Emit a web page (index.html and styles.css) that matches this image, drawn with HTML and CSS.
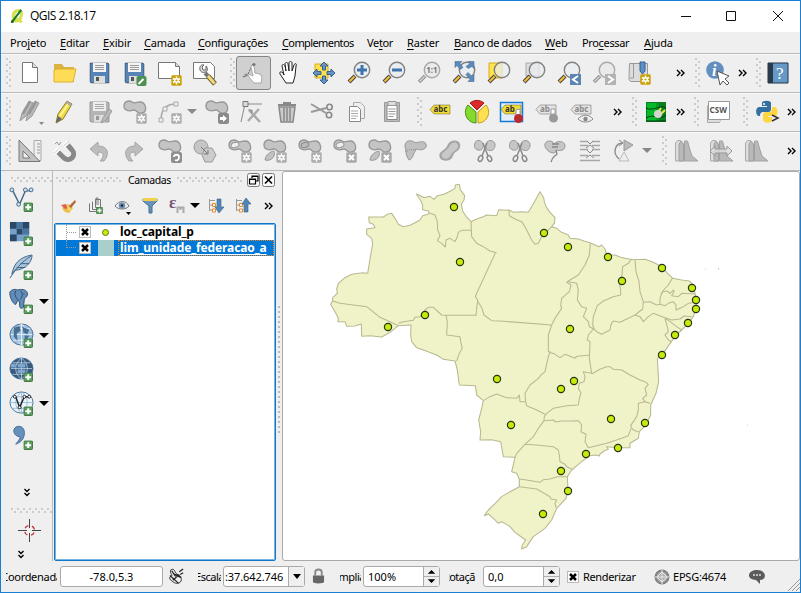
FILE: index.html
```html
<!DOCTYPE html>
<html lang="pt-BR">
<head>
<meta charset="utf-8">
<title>QGIS 2.18.17</title>
<link rel="stylesheet" href="styles.css">
</head>
<body>
<svg class="defs" aria-hidden="true">
<defs>
<symbol id="gear" viewBox="0 0 11 11"><rect x=".3" y=".3" width="10.4" height="10.4" rx="1.4" fill="currentColor"/><path d="M5.5 1.5v8M2 3.5l7 4M2 7.500l7-4" stroke="#fff" stroke-width="1.5"/><circle cx="5.500" cy="5.500" r="2.400" fill="#fff"/><circle cx="5.500" cy="5.500" r="1.100" fill="currentColor"/></symbol>
<symbol id="cross" viewBox="0 0 11 11"><rect x=".3" y=".3" width="10.4" height="10.4" rx="1.4" fill="#a8a8a8"/><path d="M3 3l5 5M8 3l-5 5" stroke="#fff" stroke-width="2.200"/></symbol>
<symbol id="plus" viewBox="0 0 10 10"><rect x=".5" y=".5" width="9" height="9" rx="1" fill="#5d9e60" stroke="#3d7541"/><path d="M5 2v6M2 5h6" stroke="#fff" stroke-width="2"/></symbol>
<symbol id="blob" viewBox="0 0 24 24"><path d="M1 6C1 1 6 0 9 2s5 0 8 0c6 0 8 10 2 11-5 1-5-3-8-3s-4 1.500-6 .5C2 10 1 9 1 6z" fill="#c4c4c4" stroke="#969696" stroke-width="1.300"/></symbol>
<symbol id="lens" viewBox="0 0 24 24"><path d="M8 15l-6 6" stroke="#444" stroke-width="4"/><path d="M7.500 15.500l-5 5" stroke="#f3bd36" stroke-width="2.200"/><circle cx="15" cy="9" r="7.700" fill="#e9edf0" fill-opacity=".75" stroke="#828282" stroke-width="1.400"/></symbol>
<symbol id="lensg" viewBox="0 0 24 24"><path d="M8 15l-6 6" stroke="#909090" stroke-width="3.500"/><path d="M7.500 15.500l-5 5" stroke="#d5d5d5" stroke-width="1.500"/><circle cx="15" cy="9" r="7.700" fill="#eaeaea" stroke="#a8a8a8" stroke-width="1.400"/></symbol>
<symbol id="chev" viewBox="0 0 10 8"><path d="M1 1l3 3-3 3M5 1l3 3-3 3" fill="none" stroke="#000" stroke-width="1.400"/></symbol>
<symbol id="chevd" viewBox="0 0 8 10"><path d="M1.500 1l2.500 2.500L6.500 1M1.500 5l2.500 2.500L6.500 5" fill="none" stroke="#000" stroke-width="1.400"/></symbol>
<symbol id="disk" viewBox="0 0 24 24"><path d="M2 2h18l1 1v19H3l-1-1z" fill="currentColor" stroke="#000" stroke-opacity=".35"/><path d="M5 2h13v9H5z" fill="#f4f4f4"/><path d="M7 4.500h9M7 6.500h9M7 8.500h9" stroke="#999"/><path d="M6 15h11v7H6z" fill="#ddd"/><path d="M8 16h3v4H8z" fill="#555"/></symbol>
<symbol id="graydisk" viewBox="0 0 24 24"><path d="M2 2h18l1 1v19H3l-1-1z" fill="#b4b4b4" stroke="#999"/><path d="M5 2h13v9H5z" fill="#eee"/><path d="M7 4.500h9M7 6.500h9M7 8.500h9" stroke="#aaa"/><path d="M6 15h11v7H6z" fill="#ddd"/><path d="M8 16h3v4H8z" fill="#999"/></symbol>
<symbol id="hist" viewBox="0 0 24 24"><path d="M1.500 22V4l2-2.500h3L9 5l1 17z" fill="#ddd" stroke="#aaa"/><path d="M5 22V5l2-3 2.500 3v17zM10.500 22V2h3l2.500 9 2 6 6 5z" fill="#b9b9b9" stroke="#a2a2a2"/></symbol>
<symbol id="tag" viewBox="0 0 24 24"><path d="M1 9.500L5 5h16v9H5z" fill="currentColor" stroke="#000" stroke-opacity=".3"/></symbol>
<symbol id="scis" viewBox="0 0 24 24"><path d="M2 4c1-4 7-3 8 1s-1 7-5 6-4-4-3-7zM14 3c3-3 9-1 8 4s-4 5-7 4-3-5-1-8z" fill="#c6c6c6" stroke="#999"/><path d="M10 4l5 13M14 4l-5 13" stroke="#8a8a8a" stroke-width="1.500"/><ellipse cx="7.500" cy="19.500" rx="2" ry="3" transform="rotate(25 7.500 19.500)" fill="#eee" stroke="#8a8a8a" stroke-width="1.500"/><ellipse cx="16.500" cy="19.500" rx="2" ry="3" transform="rotate(-25 16.500 19.500)" fill="#eee" stroke="#8a8a8a" stroke-width="1.500"/></symbol>
<symbol id="globe" viewBox="0 0 26 26"><ellipse cx="13" cy="12" rx="12" ry="11" fill="currentColor" stroke="#4a7199"/><path d="M13 1v22M2 12h22M4 6h18M4 18h18M13 1c-8 6-8 16 0 22M13 1c8 6 8 16 0 22" fill="none" stroke="var(--grid, #fff)" stroke-opacity=".75"/></symbol>
</defs>
</svg>
<div class="window">
<header class="titlebar">
<svg class="logo" viewBox="0 0 16 17"><path d="M2 10C1 4 5 1 9 1c5 0 6 5 4 9l-1 3 2 2-3 1-2-1c-4 1-6 0-7-5z" fill="#d8e04e"/><path d="M5 10c0-4 2-6 5-6 2 2 0 6-2 7z" fill="#fff"/><path d="M2 15L12 2" stroke="#1c7b2c" stroke-width="2.400"/><path d="M2 13v3M1 15h3" stroke="#174b22"/></svg>
<h1>QGIS 2.18.17</h1>
<svg class="winbtns" viewBox="0 0 110 12"><path d="M1 6.500h10M46.500 1.500h9v9h-9zM93 1l10 10M103 1L93 11" fill="none" stroke="#111"/></svg>
</header>
<nav class="menu"><span>Pro<u>j</u>eto</span><span><u>E</u>ditar</span><span><u>E</u>xibir</span><span><u>C</u>amada</span><span class="tight"><u>C</u>onfigurações</span><span class="tighter"><u>C</u>omplementos</span><span class="tight">Ve<u>t</u>or</span><span><u>R</u>aster</span><span class="tight"><u>B</u>anco de dados</span><span><u>W</u>eb</span><span class="tight">Pro<u>c</u>essar</span><span><u>A</u>juda</span></nav>

<div class="bar bar1">
<i class="grip"></i>
<svg viewBox="0 0 24 24"><path d="M4.500 1.500h10l5 5v15h-15z" fill="#fff" stroke="#777"/><path d="M14.500 1.500v5h5" fill="#ddd" stroke="#777"/></svg>
<svg viewBox="0 0 24 24"><path d="M1 3h8l2 3h10v15H1z" fill="#d9b343"/><path d="M1 21V9l3-1h19l-3 13z" fill="#ffdc55" stroke="#dfaf33"/></svg>
<svg class="blue"><use href="#disk"/></svg>
<svg class="blue" viewBox="0 0 24 24"><use href="#disk" width="24" height="24"/><rect x="13.500" y="15" width="10" height="10" rx="2" fill="#4b8f52"/><path d="M15.500 23l5-5" stroke="#fff" stroke-width="2"/></svg>
<svg class="gold" viewBox="0 0 24 24"><path d="M.5 1.500h17l4 4v12H.5z" fill="#fff" stroke="#777"/><path d="M17.500 1.500v4h4" fill="#ddd" stroke="#777"/><use href="#gear" x="13" y="14" width="11" height="11"/></svg>
<svg viewBox="0 0 24 24"><path d="M.5 1.500h17l4 4v12H.5z" fill="#fff" stroke="#777"/><path d="M12 12l3 3" stroke="#777" stroke-width="4"/><path d="M15 15l7 8" stroke="#6d6544" stroke-width="5"/><path d="M15 15l6.500 7.500" stroke="#f3d873" stroke-width="3"/><path d="M11 4c-2-1-5 1-4 5 1 3 5 3 7 1 1-2 0-4-1-5v4h-3L9 6z" fill="#ddd" stroke="#666"/></svg>
<i class="grip"></i>
<span class="pressed"><svg viewBox="0 0 24 24"><path d="M1 16l5-2M6 13L11 3" stroke="#555" stroke-dasharray="2 1"/><circle cx="12" cy="3.500" r="1.500" fill="#777"/><circle cx="4" cy="14" r="1.500" fill="#888"/><path d="M9 6c0-2 2.500-2 3 0l1 6 5 1 2 3-1 6h-7l-5-6c-1-2 0-3 2-2l2 1z" fill="#fff" stroke="#999" stroke-width=".8"/></svg></span>
<svg viewBox="-1 0 24 24"><path d="M8 22l-6-9c-1-2 1-3 3-1l1 2-2-9c0-2 2-2 3 0l1 5-1-7c0-2 3-2 3 0l1 7V2c0-2 3-2 3 0v8l2-6c1-2 3-2 2 1l-1 10-2 7z" fill="#fff" stroke="#222"/></svg>
<svg viewBox="0 0 24 24"><path d="M3 3h13v14H3z" fill="#ffe14a" stroke="#d7ac1c"/><path d="M12 1l4 4h-2.500v4h-3V5H8zM12 23l-4-4h2.500v-4h3v4H16zM1 12l4-4v2.500h4v3H5V16zM23 12l-4 4v-2.500h-4v-3h4V8z" fill="#6794c5" stroke="#36618f"/></svg>
<svg viewBox="0 0 24 24"><use href="#lens" width="24" height="24"/><path d="M15 4v10M10 9h10" stroke="#3e73ad" stroke-width="3"/></svg>
<svg viewBox="0 0 24 24"><use href="#lens" width="24" height="24"/><path d="M10 9h10" stroke="#3e73ad" stroke-width="3"/></svg>
<svg viewBox="0 0 24 24"><use href="#lensg" width="24" height="24"/><text x="9.200" y="12" class="tiny">1:1</text></svg>
<svg viewBox="0 0 24 24"><use href="#lens" width="24" height="24"/><path d="M3 1h7L8 3l3 4-3 2-3-4-2 2zM22 1v7l-2-2-4 2-2-2 4-3-2-2zM22 21v-7l-2 2-4-4-2 2 4 5-2 2z" transform="translate(0 -.5)" fill="#5c8bbb" stroke="#466d95" stroke-width=".6"/></svg>
<svg viewBox="0 0 24 24"><path d="M2 2h13v15H2z" fill="#ffe34c" stroke="#d5aa20"/><use href="#lens" width="24" height="24"/></svg>
<svg viewBox="0 0 24 24"><path d="M4 2h13v13H4z" fill="#ddd" stroke="#aaa"/><use href="#lens" width="24" height="24"/></svg>
<svg viewBox="0 0 24 24"><use href="#lens" width="24" height="24"/><path d="M13 13h11v11H13z" fill="#5c86b2"/><path d="M21 15l-5 3.500 5 3.500" fill="none" stroke="#fff" stroke-width="2"/></svg>
<svg viewBox="0 0 24 24"><use href="#lensg" width="24" height="24"/><path d="M13 13h11v11H13z" fill="#b3b3b3"/><path d="M16 15l5 3.500-5 3.500" fill="none" stroke="#fff" stroke-width="2"/></svg>
<svg class="gold" viewBox="0 0 24 24"><path d="M2.500 2.500h18v18H5c-2 0-3-1-3-3z" fill="#ddd" stroke="#999"/><path d="M6.500 3v14H3" fill="none" stroke="#999"/><path d="M13 1h5v9l-2.500 3L13 10z" fill="#5b91c7" stroke="#315f91"/><use href="#gear" x="13" y="13" width="11" height="11"/></svg>
<svg class="chev"><use href="#chev"/></svg><i class="grip"></i>
<svg viewBox="0 0 24 24"><circle cx="10" cy="9" r="8.800" fill="#628fc0"/><text x="7" y="15" class="info">i</text><path d="M12 10l3 14 3-4 4 4 2-2-4-4 4-3z" fill="#fff" stroke="#555"/></svg>
<svg class="chev"><use href="#chev"/></svg><i class="grip"></i>
<svg viewBox="0 0 24 24"><path d="M2 2h20v20H2z" fill="#6799c6" stroke="#213546"/><path d="M2 2h5v20H2z" fill="#293b4b"/><text x="10" y="18" class="help">?</text></svg>
</div>

<div class="bar bar2">
<i class="grip"></i>
<svg viewBox="0 0 24 24"><path d="M2 21l2-8L11 1l4 2-7 13zM8 21l2-8 7-12 4 2-7 13z" fill="#b9b9b9" stroke="#999"/><path d="M5 14L12 2M11 14l7-12" stroke="#959595" stroke-width="2"/><path d="M21 22h5l-2.500 3z" fill="#888"/></svg>
<svg viewBox="0 0 24 24"><path d="M3 23l2-9L14 1l5 3-9 15z" fill="#eed944" stroke="#8b7931"/><path d="M7 16L16 3" stroke="#fff59d" stroke-width="2"/><path d="M3 23l2-7 4 3z" fill="#696969"/><path d="M14 1l5 3-1.500 2-5-3z" fill="#aaa"/></svg>
<svg viewBox="0 0 24 24"><use href="#graydisk" width="24" height="24"/><path d="M13 23l2-5 6-9 3 2-6 9z" fill="#bbb" stroke="#999"/></svg>
<svg class="grey" viewBox="0 0 24 24"><use href="#blob" width="24" height="24"/><use href="#gear" x="13" y="13" width="11" height="11"/></svg>
<svg class="grey" viewBox="0 0 24 24"><path d="M3 20C3 10 8 4 18 4" fill="none" stroke="#aaa" stroke-width="1.500"/><path d="M1 18h4v4H1zM5 7h4v4H5zM16 2h4v4h-4z" fill="#eee" stroke="#aaa"/><use href="#gear" x="13" y="13" width="11" height="11"/></svg>
<svg class="drop" viewBox="0 0 10 6"><path d="M0 0h10L5 5z" fill="#888"/></svg>
<svg viewBox="0 0 24 24"><use href="#blob" width="24" height="24"/><rect x="13" y="13" width="11" height="11" rx="2" fill="#8a8a8a"/><path d="M15 17h3v-2l4 3.500-4 3.500v-2h-3z" fill="#fff"/></svg>
<svg viewBox="0 0 24 24"><path d="M5 4h17M5 4L1 22" stroke="#8a8a8a"/><path d="M3 1.500h5v5H3z" fill="#ddd" stroke="#777"/><path d="M9 10l11 12M19 9L8 21" stroke="#aaa" stroke-width="2.500"/><path d="M8 9l5 1-1 4z" fill="#999"/></svg>
<svg viewBox="0 0 24 24"><path d="M4 7h16l-2 15H6z" fill="#ccc" stroke="#888" stroke-width="1.500"/><path d="M9 8v13M12 8v13M15 8v13" stroke="#888" stroke-width="1.500"/><path d="M3 5h18M8 3h8" stroke="#888" stroke-width="2"/></svg>
<svg viewBox="0 0 24 24"><path d="M1 4l15 9M1 12l15-4" stroke="#999" stroke-width="2"/><circle cx="19.500" cy="7" r="2.700" fill="none" stroke="#888" stroke-width="1.600"/><circle cx="19" cy="15" r="2.700" fill="none" stroke="#888" stroke-width="1.600"/></svg>
<svg viewBox="0 0 24 24"><path d="M8.500 2.500h7l4 4v12h-11z" fill="#eee" stroke="#aaa"/><path d="M4.500 6.500h8l3 3v12h-11z" fill="#fff" stroke="#888"/><path d="M6 11h7M6 13.500h7M6 16h7M6 18.500h5" stroke="#aaa"/></svg>
<svg viewBox="0 0 24 24"><path d="M4.500 2.500h15v19h-15z" fill="#bbb" stroke="#999"/><path d="M7 5.500h10v14H7z" fill="#fff" stroke="#888"/><path d="M8 1.500h8v4H8z" fill="#ddd" stroke="#999"/><path d="M8.500 9h7M8.500 11.500h7M8.500 14h7M8.500 16.500h5" stroke="#999"/></svg>
<i class="grip"></i>
<svg class="yellow" viewBox="0 0 24 24"><use href="#tag" width="24" height="24"/><text x="4.500" y="12.300" class="lab">abc</text></svg>
<svg viewBox="0 0 24 24"><path d="M12 10L5 3c4-3.500 10-3.500 14 0z" fill="#df2929" stroke="#a41818"/><path d="M11 12v11C2 23-3 12 3 5z" fill="#84da2d" stroke="#488d1b"/><path d="M13 12v11c9 0 14-11 8-18z" fill="#ffe14f" stroke="#c29b1c"/></svg>
<svg class="yellow" viewBox="0 0 24 24"><path d="M.5 2.500h22v19H.5z" fill="#e5eef7" stroke="#1579d8" stroke-width="1.500"/><use href="#tag" width="24" height="24"/><text x="5" y="12.300" class="lab">ab</text><path d="M16 10v6h4V9z" fill="#fff" stroke="#999"/><circle cx="18.500" cy="18.500" r="4.500" fill="#b92b2e"/></svg>
<svg class="pale" viewBox="0 0 24 24"><use href="#tag" width="24" height="24"/><text x="5" y="12.300" class="lab mut">ab</text><path d="M16 9v6h4V9z" fill="#fff" stroke="#999"/><circle cx="18.500" cy="18" r="4.500" fill="#999"/></svg>
<svg class="pale" viewBox="0 0 24 24"><use href="#tag" width="24" height="24"/><text x="4.500" y="12.300" class="lab mut">abc</text><path d="M8 19c4-5 11-5 15 0-4 4-11 4-15 0z" fill="#eee" stroke="#888"/><circle cx="15.500" cy="19" r="2.200" fill="#888"/></svg>
<svg class="chev"><use href="#chev"/></svg><i class="grip"></i>
<svg viewBox="0 0 24 24"><path d="M2 2h20v20H2z" fill="#087d22"/><path d="M3 3h9v18H3z" fill="#05b929"/><path d="M12 3h3v18h-3z" fill="#069b25"/><path d="M2 8c7 4 14-4 20 0M2 18c8-5 13 3 20-3M2 21h20" stroke="#043c11" fill="none"/><path d="M13 14l4-6M16 15l5-5" stroke="#eee53e" stroke-width="2"/><circle cx="14" cy="14" r="4" fill="#d5d5ce"/></svg>
<svg class="chev"><use href="#chev"/></svg><i class="grip"></i>
<svg viewBox="0 0 24 24"><path d="M1.500 5.500v17h12l1-2" fill="#ddd" stroke="#aaa"/><path d="M2.500 1.500h21v18h-21z" fill="#fff" stroke="#999"/><text x="3.500" y="13" class="lab csw">CSW</text></svg>
<i class="grip"></i>
<svg viewBox="0 0 24 24"><path d="M7 6V3c0-3 9-3 9 0v6c0 3-2 3-4 3H8c-2 0-3 1-3 4-5 1-5-9-1-9h8V6z" fill="#356f9f"/><path d="M17 7h2c5 0 4 8 2 9h-8v1h4v3c0 4-9 3-9 0v-5c0-2 1-3 3-3h3c3 0 3-2 3-5z" fill="#ffd642"/><circle cx="9" cy="4" r="1" fill="#fff"/><path d="M17 15l6 3-6 3" fill="none" stroke="#333" stroke-width="1.500"/></svg>
<svg class="chev"><use href="#chev"/></svg>
</div>

<div class="bar bar3">
<i class="grip"></i>
<svg viewBox="0 0 24 24"><path d="M16 1.500h7v20h-7z" fill="#eee" stroke="#aaa"/><path d="M19 5h3M19 8h3M19 11h3M19 14h3" stroke="#999"/><path d="M1 1l21 21.500H1zM5 12v7h7z" fill="#c2c2c2" stroke="#777" fill-rule="evenodd"/></svg>
<svg viewBox="0 0 24 24"><path d="M4 12l7 7c6 5 13-3 8-8l-6-7" fill="none" stroke="#888" stroke-width="5"/><path d="M1.500 14l4.500-4.500M10.500 7l5-4" stroke="#fff" stroke-width="4"/><path d="M1.500 14l4.500-4.500M10.500 7l5-4" stroke="#aaa" stroke-width=".7"/><path d="M2 5l2-2 2 3 2-3" fill="none" stroke="#999"/></svg>
<svg viewBox="0 0 24 24"><path d="M2 10l8-7v4c10 0 12 8 6 15h-4c5-5 4-9-2-9v4z" fill="#bdbdbd" stroke="#a5a5a5"/></svg>
<svg viewBox="0 0 24 24"><path d="M20 10l-8-7v4C2 7 0 15 6 22h4c-5-5-4-9 2-9v4z" fill="#bdbdbd" stroke="#a5a5a5"/></svg>
<svg class="grey" viewBox="0 0 24 24"><use href="#blob" width="24" height="24"/><rect x="13" y="13" width="11" height="11" rx="2" fill="#8e8e8e"/><path d="M16 18c0-3 5-3 5 0s-2 4-4 3" fill="none" stroke="#fff" stroke-width="1.800"/></svg>
<svg viewBox="0 0 24 24"><circle cx="8" cy="8" r="7" fill="#c6c6c6" stroke="#999"/><path d="M12 9h7l4 7-4 7h-7l-3-7z" fill="#ccc" stroke="#999"/><path d="M8 8l7 7m0-4v4h-4" fill="none" stroke="#777"/></svg>
<svg class="grey" viewBox="0 0 24 24"><use href="#blob" width="24" height="24"/><ellipse cx="7" cy="6" rx="4" ry="2.500" fill="#eee" stroke="#999" transform="rotate(-15 7 6)"/><use href="#gear" x="13" y="13" width="11" height="11"/></svg>
<svg class="grey" viewBox="0 0 24 24"><use href="#blob" width="24" height="24"/><path d="M2 21c1-6 5-8 9-9 2 4-2 11-9 9z" fill="#c2c2c2" stroke="#999"/><use href="#gear" x="13" y="13" width="11" height="11"/></svg>
<svg class="grey" viewBox="0 0 24 24"><use href="#blob" width="24" height="24"/><ellipse cx="7" cy="6" rx="4" ry="2.500" fill="#bbb" stroke="#888" transform="rotate(-15 7 6)"/><use href="#gear" x="13" y="13" width="11" height="11"/></svg>
<svg viewBox="0 0 24 24"><use href="#blob" width="24" height="24"/><ellipse cx="7" cy="6" rx="4" ry="2.500" fill="#eee" stroke="#999" transform="rotate(-15 7 6)"/><use href="#cross" x="13" y="13" width="11" height="11"/></svg>
<svg viewBox="0 0 24 24"><use href="#blob" width="24" height="24"/><path d="M2 21c1-6 5-8 9-9 2 4-2 11-9 9z" fill="#c2c2c2" stroke="#999"/><use href="#cross" x="13" y="13" width="11" height="11"/></svg>
<svg viewBox="0 0 24 24"><path d="M2 7C2 1 8 1 11 3s10-3 12 2-5 7-9 5c-3 1-4 11-8 11C3 18 3 12 2 7z" fill="#c0c0c0" stroke="#999"/><path d="M3 13c1-4 8-1 10-3" stroke="#888" stroke-dasharray="1 1" fill="none"/></svg>
<svg viewBox="0 0 24 24"><path d="M10 5c4-6 14-4 12 3-1 5-6 4-7 9-2 6-11 6-13 2-3-7 6-7 8-14z" fill="#a5a5a5"/><path d="M12 6c3-4 9-3 8 2-1 4-6 4-7 8-2 4-6 5-9 2-2-5 6-6 8-12z" fill="#c8c8c8"/></svg>
<svg><use href="#scis"/></svg><svg><use href="#scis"/></svg>
<svg viewBox="0 0 24 24"><path d="M2 5c1-4 8-4 9 0 3-4 11-3 11 2s-5 5-9 4c0 2 0 2-2 3C5 14 1 8 2 5z" fill="#c6c6c6" stroke="#999"/><path d="M9 5h7M9 8h6M13 11l1 4c-3 3-5 3-6 8" fill="none" stroke="#888" stroke-width="1.300"/></svg>
<svg viewBox="0 0 24 24"><path d="M2 2.500h8M14 2.500h8M2 6.500h8M14 6.500h8M2 10.500h8M14 10.500h8M2 16.500h8M14 16.500h8M2 21.500h20" stroke="#a6a6a6" stroke-width="1.500"/><path d="M9 2l3 3 3-3M8 9l4-3 4 3M9 11l3 3 3-3M8 19l4-3 4 3" fill="none" stroke="#888"/></svg>
<svg viewBox="0 0 24 24"><path d="M6 20C-1 14 2 4 10 4" fill="none" stroke="#888" stroke-width="1.300"/><path d="M11 1l9 5-9 6z" fill="#bbb" stroke="#999"/><path d="M11 13l5 9H6z" fill="#eee" stroke="#bbb"/><path d="M6 1l4 3-4 3" fill="none" stroke="#888"/></svg>
<svg class="drop" viewBox="0 0 10 6"><path d="M0 0h10L5 5z" fill="#888"/></svg>
<i class="grip"></i>
<svg><use href="#hist"/></svg>
<svg viewBox="0 0 24 24"><use href="#hist" width="24" height="24"/><path d="M1 12l5-5v3h12V7l5 5-5 5v-3H6v3z" fill="#ddd" fill-opacity=".8" stroke="#999"/></svg>
<svg><use href="#hist"/></svg>
<svg class="chev"><use href="#chev"/></svg>
</div>

<main class="work">
<aside class="side">
<i class="grip flat"></i>
<div class="tool"><svg viewBox="0 0 26 26"><path d="M4 4l7 14 6-14h6" fill="none" stroke="#456887" stroke-width="1.500"/><g fill="#cfe1f1" stroke="#456887"><circle cx="3" cy="3" r="2"/><circle cx="10" cy="18" r="2"/><circle cx="17" cy="3" r="2"/><circle cx="23" cy="3" r="2"/></g><use href="#plus" x="15" y="16" width="10" height="10"/></svg></div>
<div class="tool"><svg viewBox="0 0 26 26"><path d="M1 1h20v20H1z" fill="#74a0ca"/><path d="M1 1h7v7H1zM14 1h7v7h-7zM8 8h6v6H8zM1 14h7v7H1z" fill="#2b4866"/><path d="M8 1h6v7H8zM14 8h7v6h-7z" fill="#4a759e"/><use href="#plus" x="15" y="16" width="10" height="10"/></svg></div>
<div class="tool"><svg viewBox="0 0 26 26"><path d="M3 20C5 9 11 2 24 0c0 7-6 15-18 16z" fill="#a9c4dd" stroke="#456887"/><path d="M1 24C7 15 12 8 23 1M8 13h9M12 9h9" fill="none" stroke="#3f607d"/><use href="#plus" x="15" y="16" width="10" height="10"/></svg></div>
<div class="tool"><svg viewBox="0 0 26 26"><path d="M1 3C3 0 7 0 9 1c3-1 9-1 10 3s-2 5-3 6l-1 9c-2 2-4 1-4-2v-4l-2-1-2 4C4 16 0 7 1 3z" fill="#628db8" stroke="#2e4f70"/><path d="M7 2c-2 3 0 7 2 9M12 2c3 3 2 7-1 9M15 5h1" fill="none" stroke="#2d4864"/><use href="#plus" x="15" y="16" width="10" height="10"/></svg><b></b></div>
<div class="tool"><svg class="lightblue" viewBox="0 0 26 26"><use href="#globe" width="26" height="26"/><path d="M5 5l6-2 1 5-4 3 1 8-4-5zM14 4l7 3-2 5-4-2zM16 13l5 0-4 7z" fill="#486f92"/><use href="#plus" x="15" y="16" width="10" height="10"/></svg><b></b></div>
<div class="tool"><svg class="deepblue" viewBox="0 0 26 26"><use href="#globe" width="26" height="26"/><path d="M9 7h8v4H9zM9 13h8v4H9zM2 7h5v4H2z" fill="#81a9cf"/><use href="#plus" x="15" y="16" width="10" height="10"/></svg></div>
<div class="tool"><svg class="paleblue" viewBox="0 0 26 26"><use href="#globe" width="26" height="26"/><path d="M7 6l4 11 5-11h5" fill="none" stroke="#222" stroke-width="1.500"/><g fill="#fff" stroke="#222"><circle cx="6" cy="6" r="1.500"/><circle cx="11" cy="17" r="1.500"/><circle cx="16" cy="6" r="1.500"/><circle cx="21" cy="6" r="1.500"/></g><use href="#plus" x="15" y="16" width="10" height="10"/></svg><b></b></div>
<div class="tool"><svg viewBox="0 0 26 26"><path d="M5 6c0-6 11-7 11 2 0 7-4 10-9 12 3-4 5-6 4-8-3 0-6-2-6-6z" fill="#6690bb" stroke="#456f99"/><use href="#plus" x="15" y="16" width="10" height="10"/></svg></div>
<svg class="chevd"><use href="#chevd"/></svg>
<i class="grip flat"></i>
<svg class="target" viewBox="0 0 24 24"><path d="M12.500 1v9M12.500 15v9M1 12.500h9M15 12.500h9" stroke="#444"/><circle cx="12.500" cy="12.500" r="5" fill="none" stroke="#c22e3a" stroke-width="1.300" stroke-dasharray="4 3.850" stroke-dashoffset="-2"/></svg>
<svg class="chevd second"><use href="#chevd"/></svg>
</aside>

<section class="layers">
<div class="dock"><i class="grip flat"></i><h2>Camadas</h2><i class="grip flat"></i><svg viewBox="0 0 28 14"><rect x=".5" y=".5" width="12" height="13" rx="2" fill="#fafafa" stroke="#777"/><rect x="15.500" y=".5" width="12" height="13" rx="2" fill="#fafafa" stroke="#777"/><path d="M5 5V3h6v5H9M2.500 6h6v5h-6zM5 3.500h6M3 6.500h5" fill="none" stroke="#000" stroke-width="1.200"/><path d="M18 3.500l7 7M25 3.500l-7 7" stroke="#000" stroke-width="1.600"/></svg></div>
<div class="ltools">
<svg viewBox="0 0 18 18"><path d="M2 11l6-4 5 4-4 5c-3 0-6-2-7-5z" fill="#edbd51"/><path d="M1 8l5-1 2 4-3 1z" fill="#dd5f4c"/><path d="M6 8l5 4-2 2z" fill="#f8df63"/><path d="M9 9l6-6 1 2-5 6z" fill="#b46a38"/></svg>
<svg viewBox="0 0 18 18"><path d="M2.500 6.500v8h7M5.500 4.500v8h7M8.500 2.500h5v8h-5z" fill="none" stroke="#777"/><path d="M9 8V1h2v7M13.500 4v10" fill="none" stroke="#777"/><use href="#plus" x="9" y="10" width="7" height="7"/></svg>
<svg viewBox="0 0 18 18"><path d="M1 9c4-6 11-6 14 0-3 4-11 4-14 0z" fill="#eee" stroke="#777"/><circle cx="8" cy="8.500" r="3.200" fill="#6992b7"/><circle cx="8" cy="8.500" r="1.200" fill="#222"/><path d="M12 15h5l-2.500 3z"/></svg>
<svg viewBox="0 0 18 18"><path d="M2 2h14v2l-5 5v7H8V9L2 4z" fill="#6a94bd" stroke="#446c91"/><path d="M2 1h14v3H2z" fill="#f4d247"/></svg>
<svg viewBox="0 0 18 18"><text x="1" y="11" class="eps">ε</text><path d="M9.500 16v-5.500h6V16M12.500 13v-2" fill="none" stroke="#aaa" stroke-width="2"/></svg>
<svg class="drop" viewBox="0 0 10 6"><path d="M0 0h10L5 5z"/></svg>
<svg viewBox="0 0 18 18"><path d="M2.500 2v12M3 3.500h5M3 8h3M3 13h3" stroke="#999"/><path d="M5.500 6.500h3v3h-3zM5.500 12h3v3h-3z" fill="#fff" stroke="#e78a26"/><path d="M10 2h4v8h3l-5 6-4-6h2z" fill="#5386b8" stroke="#355f88" stroke-width=".6"/></svg>
<svg viewBox="0 0 18 18"><path d="M2.500 2v12M3 3.500h5M3 8h3M3 13h3" stroke="#999"/><path d="M5.500 6.500h3v3h-3zM5.500 12h3v3h-3z" fill="#fff" stroke="#e78a26"/><path d="M10 15h4V7h3l-5-6-4 6h2z" fill="#5386b8" stroke="#355f88" stroke-width=".6"/></svg>
<svg class="chev"><use href="#chev"/></svg>
</div>
<ul class="tree">
<li><i class="twig"></i><i class="check"><svg viewBox="0 0 8 8"><path d="M1 1l6 6M7 1L1 7"/></svg></i><i class="point"></i><span>loc_capital_p</span></li>
<li class="selected"><i class="twig last"></i><i class="check"><svg viewBox="0 0 8 8"><path d="M1 1l6 6M7 1L1 7"/></svg></i><i class="swatch"></i><span>lim_unidade_federacao_a</span></li>
</ul>
</section>
<i class="splitter"></i>
<section class="canvas">
<svg viewBox="283 172 516 388">
<g transform="translate(320 175) scale(.33333)" stroke="#b9b891" stroke-width="3.200" stroke-linejoin="round">
<path fill="#f0f3c8" d="M289 57L303 63 312 68 330 64 342 73 352 62 372 58 392 48 405 40 406 30 418 28 421 44 434 62 432 75 424 88 428 108 438 124 453 140 465 134 478 129 490 125 500 120 530 122 536 104 560 106 567 105 580 112 605 110 625 112 638 90 648 72 660 50 671 68 673 80 678 95 690 112 705 128 703 145 695 155 710 160 725 172 745 180 750 190 775 192 792 198 810 203 830 212 838 215 845 210 855 222 860 240 885 240 900 246 915 250 940 254 975 253 1000 262 1025 275 1040 292 1058 310 1085 315 1108 318 1120 330 1125 355 1130 375 1128 400 1120 425 1105 445 1085 465 1065 485 1054 500 1040 520 1025 542 1012 550 1016 620 1008 655 992 690 992 720 978 750 958 770 955 790 930 805 930 818 895 818 860 815 865 823 852 828 840 837 838 843 828 840 810 842 785 860 755 885 742 905 744 945 738 970 710 1000 695 1035 675 1060 640 1085 620 1115 605 1122 607 1110 617 1095 600 1083 585 1072 570 1055 545 1040 535 1045 520 1030 505 1017 493 1022 505 1005 525 986 545 965 570 950 598 935 598 913 590 895 575 890 580 870 585 847 550 845 542 800 515 794 480 795 482 770 476 735 485 700 490 677 470 660 466 632 418 630 412 585 405 558 370 553 350 540 310 525 290 518 275 500 272 480 273 450 235 452 210 472 185 486 150 482 125 484 124 447 105 453 80 454 75 440 54 440 55 430 45 410 32 388 38 378 38 368 52 355 50 342 55 325 75 308 95 298 128 293 143 295 152 240 158 208 155 190 140 178 140 162 165 158 160 148 148 143 146 126 190 126 202 118 215 115 225 130 235 148 250 155 272 150 300 135 308 122 328 116 325 108 308 104 308 92 303 78z"/>
<path fill="none" d="M328 114L345 120 352 140 353 165 360 182 352 197 365 205 376 216 378 195 390 190 405 200 412 185 415 172 425 166 453 166M453 140L455 185 470 205 490 215 510 228 530 233M526 234L466 364 473 375 468 421 378 421M473 378L486 400 492 420 515 437 540 438 695 450M36 377L60 385 140 395 180 427 210 440 235 452M235 445L250 440 280 436 285 427 300 425 315 405 325 397 340 397 365 420 378 421 382 440 380 480 420 485 422 500 427 520 418 535 410 558M567 105L568 122 585 132 605 140 615 155 635 195 645 208 655 205 665 185 690 160 697 155M811 205L808 240 795 270 775 300 745 318 740 322 753 330 748 350 725 370 722 390 725 400 705 430 695 450 685 480 685 530 691 530 M745 320L770 325 775 345 772 375 785 395 800 400 790 425 805 440 808 455 822 462M935 252L925 265 908 275 905 310 898 325 902 345 902 360 880 365 850 378 832 392 820 425 818 450 822 462 830 470 845 478 870 465 873 448 880 438 900 442 925 430 945 420 968 402 970 380 960 350 957 320 948 290 945 256M1058 308L1045 330 1028 348 1020 370 1020 388 1010 390 990 380 970 382M1022 358L1030 350 1042 348 1050 356 1060 345 1062 350 1055 362 1075 365 1085 355 1125 357M1020 388L1035 392 1045 385 1060 380 1068 390 1068 405 1090 395 1105 385 1128 382M945 420L960 425 970 440 985 425 1000 415 1035 428 1055 435 1080 432 1092 423 1115 425M1035 430L1050 440 1070 455 1085 465M1035 432L1042 455 1045 470 1035 480 1045 495 1055 500M820 462L805 480 802 495 810 500 808 550 815 595 790 590 795 605 792 620 778 625 775 640 783 655 778 670 775 690 740 692 700 700 680 715 673 725 672 737 700 735 707 741 725 738 750 738 775 737 785 750 783 770 798 778 795 800 805 818 830 812 860 805 905 790 925 782 935 755M688 532L702 536 720 548 735 538 765 550 770 544 790 542 808 540M691 530L685 545 675 590 665 598 655 610 630 630 615 655 617 680 620 692 650 705 675 718M490 677L510 665 530 657 560 668 590 670 598 660 600 680 617 680M672 737L655 760 640 785 615 808 590 835 585 847M615 808L650 810 700 815 715 825 718 840 720 860 735 868 740 875 755 882M598 912L620 915 660 922 670 914 690 912 712 905 742 905M598 935L650 942 690 965 693 972 710 975 705 985 708 998M815 597L840 583 860 575 870 575 880 583 905 585 930 600 960 615 975 620 985 628 975 640 980 660 968 670 975 680 955 685 955 705 950 725 940 740 932 752 940 765 955 770M975 680L990 685"/>
</g>
<g fill="#c7ea09" stroke="#223414" stroke-width="1.200"><circle cx="454" cy="207" r="3.600"/><circle cx="544" cy="233" r="3.600"/><circle cx="568" cy="247" r="3.600"/><circle cx="460" cy="262" r="3.600"/><circle cx="608" cy="257" r="3.600"/><circle cx="622" cy="281" r="3.600"/><circle cx="662" cy="268" r="3.600"/><circle cx="692" cy="288" r="3.600"/><circle cx="696" cy="300" r="3.600"/><circle cx="696" cy="309" r="3.600"/><circle cx="688" cy="323" r="3.600"/><circle cx="675" cy="335" r="3.600"/><circle cx="662" cy="355" r="3.600"/><circle cx="570" cy="329" r="3.600"/><circle cx="425" cy="315" r="3.600"/><circle cx="388" cy="327" r="3.600"/><circle cx="497" cy="379" r="3.600"/><circle cx="574" cy="381" r="3.600"/><circle cx="561" cy="389" r="3.600"/><circle cx="511" cy="425" r="3.600"/><circle cx="611" cy="419" r="3.600"/><circle cx="645" cy="423" r="3.600"/><circle cx="618" cy="448" r="3.600"/><circle cx="586" cy="454" r="3.600"/><circle cx="561" cy="471" r="3.600"/><circle cx="568" cy="491" r="3.600"/><circle cx="543" cy="514" r="3.600"/></g>
<path d="M718 269h1M705 269h.5M747.500 425h.5" stroke="#aaa784"/>
</svg>
</section>
</main>

<footer class="status">
<span class="clip coord"><span>Coordenada</span></span>
<span class="field f1">-78.0,5.3</span>
<svg class="mouse" viewBox="0 0 18 18"><path d="M3 2c3-2 4 1 5 3s5 2 6 6-3 6-6 5-7-4-6-6 3-2 2-3-2-3-1-5z" fill="#eee" stroke="#222"/><path d="M4 3l4 6M2 8l9 8M6 7c3-1 4 2 8 3M5 13l7-6M12 4l4-3M13 7l3-2" stroke="#222" stroke-width="1.300"/></svg>
<span class="clip esc"><span>Escala</span></span>
<span class="field f2"><span>:37.642.746</span><i><svg viewBox="0 0 10 6"><path d="M1 0h8L5 5z"/></svg></i></span>
<svg class="lock" viewBox="0 0 14 18"><path d="M3.500 8V4.500c0-4 7-4 7 0V8" fill="none" stroke="#888" stroke-width="2"/><path d="M1 8h12v7c0 2-12 2-12 0z" fill="#666"/></svg>
<span class="clip amp"><span>Ampliar</span></span>
<span class="field f3"><span>100%</span><i class="spin"><svg viewBox="0 0 16 20"><path d="M4 7h8L8 3zM4 13h8l-4 4z"/><path d="M0 10h16" stroke="#aaa"/></svg></i></span>
<span class="clip rot"><span>Rotação</span></span>
<span class="field f4"><span>0,0</span><i class="spin"><svg viewBox="0 0 16 20"><path d="M4 7h8L8 3zM4 13h8l-4 4z"/><path d="M0 10h16" stroke="#aaa"/></svg></i></span>
<i class="check"><svg viewBox="0 0 8 8"><path d="M1 1l6 6M7 1L1 7"/></svg></i>
<span class="render">Renderizar</span>
<svg class="crs" viewBox="0 0 16 16"><circle cx="8" cy="8" r="6.500" fill="#aaa" stroke="#808080" stroke-width="2"/><path d="M8 1v14M1 8h14M8 3L3 8l5 5 5-5z" fill="none" stroke="#e8e8e8"/></svg>
<span class="epsg">EPSG:4674</span>
<svg class="msg" viewBox="0 0 16 16"><path d="M8 1c10 0 10 10 3 10v4l-4-4C-3 11-2 1 8 1z" fill="#5b5b5b"/><path d="M4 6h2M7 6h2M10 6h2" stroke="#ddd" stroke-width="1.500"/></svg>
<svg class="size" viewBox="0 0 12 12"><path d="M0 12L12 0M4 12l8-8M8 12l4-4" stroke="#999"/></svg>
</footer>
</div>
</body>
</html>
```
FILE: styles.css
```css
* { box-sizing: border-box; }
body { margin: 0; font: 11px/14px "Noto Sans", "Open Sans", sans-serif; color: #000; }
svg { display: block; overflow: visible; }
i { font-style: normal; display: block; }
.defs { width: 0; height: 0; position: absolute; }
.window { width: 801px; height: 593px; overflow: hidden; border: 1px solid #1780d5; background: #efefef; display: flex; flex-direction: column; }

.titlebar { height: 31px; flex: none; background: #fff; display: flex; align-items: center; padding: 0 17px 2px 9px; }
.titlebar h1 { flex: 1; margin: 0 0 0 5px; font: 12px/16px "Open Sans", "Noto Sans", sans-serif; letter-spacing: -.52px; }
.logo { width: 15px; height: 16px; }
.winbtns { width: 110px; height: 12px; margin-right: -7px; }

.menu { height: 21px; flex: none; display: grid; grid-template-columns: 50px 43px 41px 54px 84px 85px 40px 47px 91px 37px 62px 50px; padding-left: 9px; line-height: 21px; white-space: nowrap; letter-spacing: -.15px; }
.menu u { text-underline-offset: 2px; }
.menu .tight { letter-spacing: -.35px; }
.menu .tighter { letter-spacing: -.6px; }

.bar { height: 39px; flex: none; border-top: 1px solid #b8b8b8; box-shadow: inset 0 1px #fafafa; display: grid; align-items: center; }
.bar > svg, .pressed svg { width: 24px; height: 24px; }
.bar > svg { margin-left: 6px; }
.bar > svg.chev { width: 10px; height: 8px; }
.bar > svg.drop { width: 10px; height: 6px; margin-left: 0; }
.bar1 { grid-template-columns: 11px repeat(6, 35px) 14px repeat(12, 35px) 35px 10px 30px 22px 9px 33px; }
.bar2 { grid-template-columns: 11px repeat(5, 35px) 12px repeat(6, 35px) 14px 36px repeat(4, 35px) 27px 12px 34px 20px 8px 34px 15px 34px 17px; }
.bar3 { grid-template-columns: 11px repeat(18, 35px) 18px 8px repeat(3, 35px) 27px; }
.bar1 > svg.chev { margin-left: 20px; }
.bar1 > svg.chev ~ svg { margin-left: 4px; }
.bar1 > svg.chev ~ svg.chev { margin-left: 7px; }
.bar1 > svg:last-child { margin-left: 6px; }
.bar2 > svg.chev { margin-left: 14px; }
.bar2 > svg.chev ~ svg.chev { margin-left: 4px; }
.bar3 > svg:last-child { margin-left: 14px; }
.pressed { width: 35px; height: 34px; border: 1px solid #858585; border-radius: 3px; background: #d0d0d0; padding: 4px 5px; }

.grip { width: 6px; height: 30px; justify-self: end; background: radial-gradient(circle at 1px 1px, #cbcbcb 1px, transparent 1.300px) 0 0 / 6px 6px, radial-gradient(circle at 1px 1px, #cbcbcb 1px, transparent 1.300px) 3px 3px / 6px 6px; }
.grip.flat { height: 6px; }
.blue { color: #5784b6; }
.gold { color: #c9a20a; }
.grey { color: #adadad; }
.yellow { color: #f1db35; }
.pale { color: #e4e4e4; }
.lightblue { color: #9bbddd; }
.deepblue { color: #36597c; --grid: #cbdff1; }
.paleblue { color: #edf5fc; --grid: #82abd0; }
.tiny { font: bold 8px "Noto Sans", sans-serif; fill: #777; }
.info { font: italic bold 16px "Liberation Serif", serif; fill: #fff; }
.help { font: 17px "Liberation Serif", serif; fill: #fff; }
.lab { font: bold 8px "Noto Sans", sans-serif; fill: #333; }
.mut { fill: #888; }
.csw { fill: #555; letter-spacing: .1px; }
.eps { font: bold 17px "Liberation Serif", serif; fill: #765574; }

.work { height: 391px; flex: none; display: flex; border-top: 1px solid #b8b8b8; }
.side { width: 52px; border-right: 1px solid #bbb; padding: 6px 0 0 5px; }
.side .grip { width: 41px; }
.tool { height: 34px; display: flex; align-items: center; padding: 0 0 1px 3px; }
.tool svg { width: 25px; height: 25px; }
.tool b { margin-left: 5px; border: 5px solid transparent; border-top-color: #000; border-bottom: 0; }
.chevd { width: 8px; height: 10px; margin: 33px 0 0 17px; }
.chevd + .grip { margin-top: 10px; }
.target { width: 24px; height: 24px; margin: 4px 0 0 11px; }
.chevd.second { margin: 8px 0 0 11px; }

.layers { width: 223px; padding-left: 1px; display: flex; flex-direction: column; }
.dock { height: 18px; display: flex; align-items: center; padding: 0 1px 0 2px; }
.dock .grip { width: 66px; }
.dock h2 { width: 55px; margin: 0; text-align: center; font-size: 10.500px; font-weight: 400; letter-spacing: -.4px; white-space: nowrap; }
.dock svg { width: 28px; height: 14px; margin-left: 4px; }
.ltools { height: 34px; display: grid; grid-template-columns: repeat(5, 27px) 12px 27px 27px 20px; align-items: center; padding-left: 6px; }
.ltools svg { width: 18px; height: 18px; }
.ltools .drop { width: 10px; height: 6px; margin-left: -5px; }
.ltools .chev { width: 10px; height: 8px; margin-left: 3px; }
.tree { flex: 1; width: 222px; margin: 0; padding: 0; list-style: none; background: #fff; border: 1px solid #1277c7; box-shadow: inset 0 0 0 1px #78b4e2; border-radius: 2px; }
.tree li { height: 16px; display: flex; align-items: center; padding-left: 11px; font-weight: 700; font-size: 12px; line-height: 16px; }
.tree span { height: 16px; padding-left: 2px; letter-spacing: -.12px; white-space: nowrap; line-height: 15px; }
.tree .selected { background: #0078d7; color: #fff; margin: 0 1px; padding-left: 10px; }
.selected span { outline: 1px dotted #e4862c; outline-offset: -1px; text-decoration: underline; text-underline-offset: 2px; flex: 1; }
.twig { width: 10px; height: 16px; flex: none; border-left: 1px dotted #999; background: repeating-linear-gradient(90deg, #999 0 1px, transparent 1px 2px) 0 8px / 10px 1px no-repeat; }
.twig.last { height: 8px; align-self: flex-start; background-position: 0 7px; }
.check { width: 12px; height: 12px; flex: none; margin-left: 3px; padding: 1px; background: #fff; border: 1px solid #bbb; }
.check svg { width: 8px; height: 8px; stroke: #000; stroke-width: 2.500; }
.point { width: 7px; height: 7px; flex: none; margin: 0 9px 0 11px; border: 1px solid #607b13; border-radius: 50%; background: #c7ea09; }
.swatch { width: 16px; height: 16px; flex: none; margin: 0 4px 0 7px; background: #a8cfcb; }
.splitter { width: 6px; background: radial-gradient(circle at 3px 1px, #bbb 1px, transparent 1.200px) 0 0 / 6px 5px; background-clip: content-box; padding: 132px 0 125px; }
.canvas { width: 518px; height: 390px; background: #fff; border: 1px solid #aaa; border-radius: 3px; }
.canvas svg { width: 516px; height: 388px; }

.status { height: 30px; flex: none; display: flex; align-items: center; padding: 1px 0 0 5px; white-space: nowrap; }
.status > * { flex: none; }
.clip { overflow: hidden; display: flex; justify-content: center; }
.clip span { flex: none; letter-spacing: -.5px; }
.coord { width: 51px; }
.coord span { letter-spacing: -.3px; }
.field { height: 21px; border: 1px solid #aaa; border-radius: 3px; background: #fff; display: flex; align-items: center; padding-left: 4px; }
.f1 { width: 103px; margin-left: 3px; justify-content: center; padding: 0; }
.field i { margin-left: auto; width: 16px; height: 19px; border-left: 1px solid #aaa; background: #efefef; display: flex; align-items: center; justify-content: center; }
.field i svg { width: 10px; height: 6px; }
.field i.spin svg { width: 15px; height: 19px; }
.mouse { width: 17px; height: 17px; margin-left: 5px; }
.esc { width: 23px; margin-left: 13px; }
.f2 { width: 82px; margin-left: 2px; padding-left: 1px; letter-spacing: -.1px; }
.lock { width: 13px; height: 17px; margin-left: 7px; }
.amp { width: 21px; margin-left: 15px; }
.f3 { width: 77px; margin-left: 2px; }
.rot { width: 26px; margin-left: 9px; }
.f4 { width: 77px; margin-left: 8px; }
.status .check { margin-left: 7px; }
.render { margin-left: 4px; width: 53px; letter-spacing: -.35px; }
.crs { width: 16px; height: 16px; margin-left: 18px; }
.epsg { width: 55px; margin-left: 3px; letter-spacing: -.2px; }
.msg { width: 16px; height: 16px; margin-left: 21px; }
.size { width: 12px; height: 12px; margin-left: auto; align-self: flex-end; }
```
